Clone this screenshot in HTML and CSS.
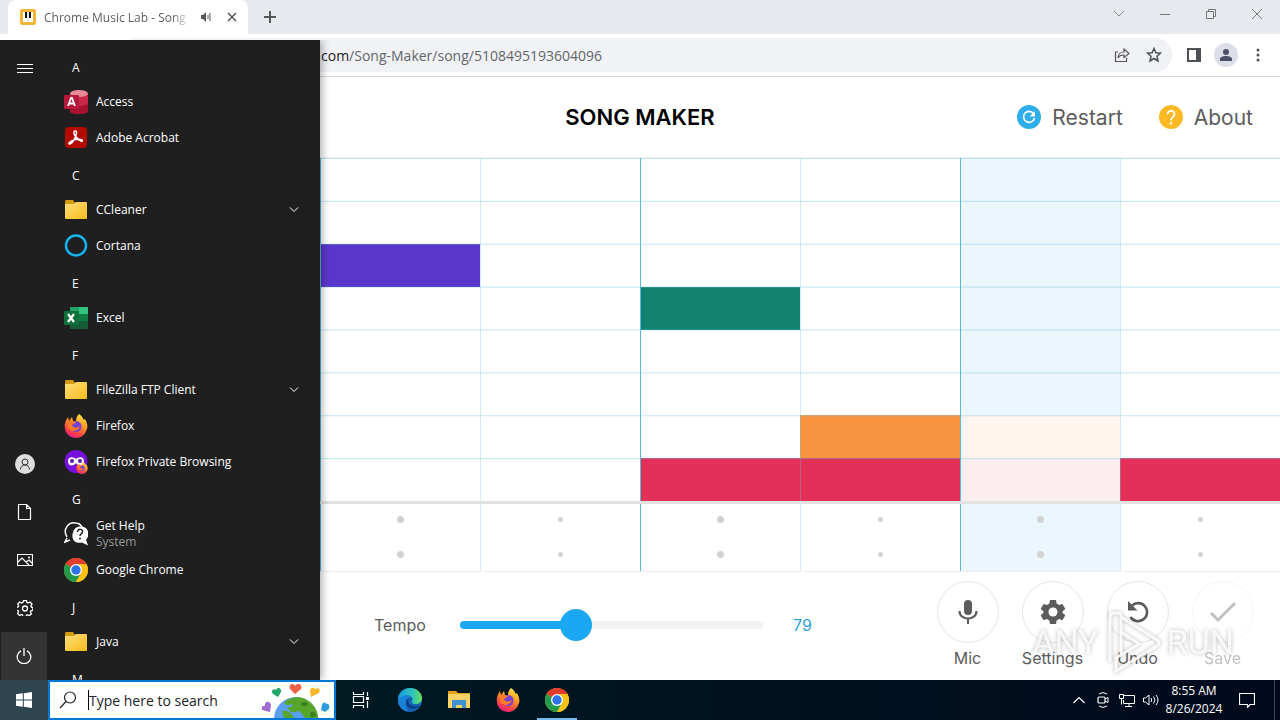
FILE: index.html
```html
<!DOCTYPE html>
<html lang="en">
<head>
<meta charset="utf-8">
<title>Chrome Music Lab - Song Maker</title>
<link rel="stylesheet" href="styles.css">
</head>
<body>
<svg class="sprite" aria-hidden="true">
  <defs>
    <linearGradient id="gold" x1="0" y1="0" x2="1" y2="1"><stop offset="0" stop-color="#ffe07a"/><stop offset="1" stop-color="#f7bb1c"/></linearGradient>
    <linearGradient id="flame" x1=".8" y1="0" x2=".3" y2="1"><stop offset="0" stop-color="#fff04a"/><stop offset=".4" stop-color="#ff9a22"/><stop offset=".8" stop-color="#ff3a50"/><stop offset="1" stop-color="#e6208a"/></linearGradient>
    <linearGradient id="sea" x1="0" y1="0" x2="1" y2="0"><stop offset="0" stop-color="#1b9de2"/><stop offset=".6" stop-color="#2cc4bd"/><stop offset="1" stop-color="#6ade5b"/></linearGradient>
  </defs>
  <symbol id="folder" viewBox="0 0 24 24"><path d="M1 4q0-2 1-2h7l2 3h11q1 0 1 1v5H1z" fill="#d59b12"/><path d="M1 6h9l2-2h10q1 0 1 1v15q0 1-1 1H2q-1 0-1-1z" fill="url(#gold)"/></symbol>
  <symbol id="firefox" viewBox="0 0 24 24"><path d="M15 0c4 3 4 5 5 6l1-1c2 4 3 7 2 10-2 6-6 9-11 9S1 20 1 14c-1-4 1-8 3-11l1 4 3-4 1 4h3c0-3 1-5 3-7z" fill="url(#flame)"/><circle cx="12" cy="12.500" r="5.500" fill="#7542d8"/><path d="M4 8c4-2 5 0 8 0-1 2-4 2-4 4 3 2 5 2 8 0-1 5-8 7-12 2z" fill="#ff7a24"/></symbol>
  <symbol id="chrome" viewBox="0 0 24 24"><circle cx="12" cy="12" r="12" fill="#fbc116"/><path d="M12 12L1.600 6A12 12 0 0 1 22.400 6z" fill="#e33b2e"/><path d="M1.600 6A12 12 0 0 0 12 24l5-9-5-3z" fill="#239a4b"/><path d="M12 6h10.400A12 12 0 0 1 12 24l5.200-9z" fill="#fbc116"/><circle cx="12" cy="12" r="6" fill="#fff"/><circle cx="12" cy="12" r="4.700" fill="#2e73e8"/></symbol>
  <symbol id="down" viewBox="0 0 10 10"><path d="M1 2.500l4 4 4-4" fill="none" stroke="currentColor"/></symbol>
</svg>

<div class="desktop">
  <div class="browser">
    <div class="tabstrip">
      <div class="tab">
        <svg class="i16" viewBox="0 0 16 16"><rect width="16" height="16" rx="2" fill="#f3b63b"/><path d="M3 3h10v10H3z" fill="#fff"/><path d="M5 3h2v6H5zM9 3h2v6H9z" fill="#111"/><path d="M8 3v10" stroke="#ccc"/></svg>
        <span class="tab-title">Chrome Music Lab - Song Maker</span>
        <svg class="i12" viewBox="0 0 12 12"><path d="M1 4h2l3-3v10L3 8H1z" fill="#555"/><path d="M8 4v4M10 2v8" stroke="#555"/></svg>
        <button class="plain close" aria-label="Close tab"><svg class="i10" viewBox="0 0 10 10"><path d="M1 1l8 8M9 1L1 9" stroke="#555" stroke-width="1.500"/></svg></button>
      </div>
      <button class="plain newtab" aria-label="New tab"><svg class="i12" viewBox="0 0 12 12"><path d="M6 0v12M0 6h12" stroke="#555" stroke-width="2"/></svg></button>
      <div class="winbtns">
        <button class="plain" aria-label="Search tabs"><svg class="i12" viewBox="0 0 12 12"><path d="M1 3l5 5 5-5" fill="none" stroke="#888"/></svg></button>
        <button class="plain" aria-label="Minimize"><svg class="i12" viewBox="0 0 12 12"><path d="M1 6.500h10" stroke="#777"/></svg></button>
        <button class="plain" aria-label="Restore"><svg class="i12" viewBox="0 0 12 12"><path d="M1.500 3.500h7v7h-7zM3.500 3.500v-2h7v7h-2" fill="none" stroke="#777"/></svg></button>
        <button class="plain" aria-label="Close"><svg class="i12" viewBox="0 0 12 12"><path d="M1 1l10 10M11 1L1 11" stroke="#777"/></svg></button>
      </div>
    </div>
    <div class="toolbar">
      <div class="omnibox">
        <label for="url">com</label><input id="url" value="/Song-Maker/song/5108495193604096">
        <button class="plain" aria-label="Share"><svg class="i16" viewBox="0 0 16 16"><path d="M4 5H1.500v9.500h11V11M4 11c0-4 3-6 6-6V2l5 4.500-5 4V8c-3 0-5 1-6 3z" fill="none" stroke="#555" stroke-width="1.200"/></svg></button>
        <button class="plain" aria-label="Bookmark"><svg class="i16" viewBox="0 0 16 16"><path d="M8 1.500l1.900 4.300 4.600.4-3.500 3.100 1 4.700-4-2.500L4 14l1-4.700L1.500 6.200l4.600-.4z" fill="none" stroke="#4d5156" stroke-width="1.500"/></svg></button>
      </div>
      <button class="plain" aria-label="Side panel"><svg class="i14" viewBox="0 0 14 14"><path d="M1 1h12v12H1z" fill="none" stroke="#4d5156" stroke-width="2"/><path d="M9 1h4v12H9z" fill="#4d5156"/></svg></button>
      <button class="plain avatar" aria-label="Profile"><svg class="i14" viewBox="0 0 14 14"><circle cx="7" cy="4" r="3" fill="#4b5066"/><path d="M1 13v-2c0-4 12-4 12 0v2z" fill="#4b5066"/></svg></button>
      <button class="plain" aria-label="Menu"><svg class="i14" viewBox="0 0 14 14"><circle cx="7" cy="2" r="1.500" fill="#4d5156"/><circle cx="7" cy="7" r="1.500" fill="#4d5156"/><circle cx="7" cy="12" r="1.500" fill="#4d5156"/></svg></button>
    </div>

    <header class="songhead">
      <h1>SONG MAKER</h1>
      <div class="actions">
        <button class="plain action"><svg class="i24" viewBox="0 0 24 24"><circle cx="12" cy="12" r="12" fill="#2eaee8"/><path d="M16.500 8.500A5.500 5.500 0 1 0 17.500 13" fill="none" stroke="#fff" stroke-width="1.600"/><path d="M18 6v5.500h-5.500z" fill="#fff"/></svg>Restart</button>
        <button class="plain action"><svg class="i24" viewBox="0 0 24 24"><circle cx="12" cy="12" r="12" fill="#fdb924"/><path d="M8.500 9.500C8.500 4.500 16 5 15.500 9.500 15 12 12 12 12 15.500" fill="none" stroke="#fff" stroke-width="1.700"/><circle cx="12" cy="18.300" r="1.200" fill="#fff"/></svg>About</button>
      </div>
    </header>

    <main class="notes">
      <div class="now"></div>
      <div class="note violet"></div><div class="note teal"></div><div class="note orange"></div>
      <div class="note red r5"></div><div class="note red r6"></div><div class="note red r8"></div>
      <div class="note paleorange"></div><div class="note palered"></div>
      <div class="lines"></div>
    </main>
    <section class="beats">
      <i></i><i></i><i></i><i></i><i></i><i></i><i></i><i></i>
      <i></i><i></i><i></i><i></i><i></i><i></i><i></i><i></i>
    </section>

    <footer class="controls">
      <label for="tempo">Tempo</label>
      <input id="tempo" class="tempo" type="range" min="40" max="146" value="79">
      <output for="tempo">79</output>
      <div class="rounds">
        <button class="plain round"><span><svg class="i28" viewBox="0 0 28 28"><rect x="10" y="2" width="8" height="15" rx="4" fill="#5c5c5c"/><path d="M5.500 13c0 10 17 10 17 0M14 20v6" fill="none" stroke="#5c5c5c" stroke-width="2.200"/></svg></span>Mic</button>
        <button class="plain round"><span><svg class="i28" viewBox="0 0 28 28"><path d="M11 2h6l.6 3.500 2.500 1.400L23.400 6l3 5-2.800 2.200v1.800l2.800 2.200-3 5-3.300-1.200-2.500 1.400L17 26h-6l-.6-3.600-2.500-1.400-3.300 1.200-3-5L4.400 15v-1.800L1.600 11l3-5 3.300.9 2.500-1.400z" fill="#5c5c5c"/><circle cx="14" cy="14" r="4.500" fill="#fff"/></svg></span>Settings</button>
        <button class="plain round"><span><svg class="i28" viewBox="0 0 28 28"><path d="M8 7.500A9 9 0 1 1 6.500 19" fill="none" stroke="#5c5c5c" stroke-width="2.600"/><path d="M4 3v9.500h9.500z" fill="#5c5c5c"/></svg></span>Undo</button>
        <button class="plain round" disabled><span><svg class="i28" viewBox="0 0 28 28"><path d="M2 15l7 7L26 5" fill="none" stroke="#5c5c5c" stroke-width="3"/></svg></span>Save</button>
      </div>
      <div class="watermark"><b>ANY</b><svg viewBox="0 0 60 64"><path d="M7 52V7q0-4 4-4h4q3 0 3 3v39M18 7l36 23q4 3 0 6L13 61V48l23-14-18-12" fill="none" stroke="#fff" stroke-opacity=".85" stroke-width="3"/></svg><b>RUN</b></div>
    </footer>
  </div>

  <aside class="start">
    <nav class="rail">
      <button class="plain" aria-label="Expand"><svg class="i16" viewBox="0 0 16 16"><path d="M0 4.500h16M0 8.500h16M0 12.500h16" stroke="#fff"/></svg></button>
      <button class="plain user" aria-label="User"><svg class="i20" viewBox="0 0 20 20"><circle cx="10" cy="10" r="10" fill="#ddd"/><circle cx="10" cy="8" r="3" fill="none" stroke="#333"/><path d="M5.500 15.500c0-6 9-6 9 0" fill="none" stroke="#333"/></svg></button>
      <button class="plain" aria-label="Documents"><svg class="i16" viewBox="0 0 16 16"><path d="M1.500.5h8l4 4v11h-12zM9.500.5v4h4" fill="none" stroke="#fff" stroke-width="1.200"/></svg></button>
      <button class="plain" aria-label="Pictures"><svg class="i16" viewBox="0 0 16 16"><path d="M.5 2.500h15v11H.5zM1 10l4-4 7 7M9 10l3-2 3 3" fill="none" stroke="#fff" stroke-width="1.200"/><circle cx="12" cy="5.500" r="1" fill="#fff"/></svg></button>
      <button class="plain" aria-label="Settings"><svg class="i16" viewBox="0 0 16 16"><path d="M6.500.5h3l.4 2 1.300.6 1.900-1.100 1.900 2-1.100 1.800.5 1.300 1.500.4v2.800l-2 .5-.5 1.200 1 1.800-2 1.900-1.800-1-1.200.5-.5 1.800h-3l-.4-2-1.300-.5-1.700 1-2-2 1.100-1.700-.6-1.200-1.700-.5V7.400l1.800-.4.6-1.300-1-1.700 2-2L4.400 3l1.500-.5z" fill="none" stroke="#fff" stroke-width="1.300"/><circle cx="8" cy="8.500" r="2.500" fill="none" stroke="#fff" stroke-width="1.300"/></svg></button>
      <button class="plain power" aria-label="Power"><svg class="i16" viewBox="0 0 16 16"><path d="M5 2.800a6.800 6.800 0 1 0 6 0M8 0v8" fill="none" stroke="#fff" stroke-width="1.300"/></svg></button>
    </nav>
    <ul class="apps">
      <li class="letter">A</li>
      <li><svg class="i24" viewBox="0 0 24 24"><path d="M6 3v18c0 4 18 4 18 0V3z" fill="#c82746"/><path d="M6 14c3 3 15 3 18-1v8c0 4-18 4-18 0z" fill="#a6122d"/><ellipse cx="15" cy="3.500" rx="9" ry="3.500" fill="#e8899a"/><rect y="5" width="15" height="14" rx="1" fill="#b7193a"/><path d="M4 16L7 8h1l3 8M5 13.500h5" fill="none" stroke="#fff" stroke-width="1.800"/></svg><span>Access</span></li>
      <li><svg class="i24" viewBox="0 0 24 24"><rect x="1" y="1" width="22" height="21" rx="4" fill="#b30b00"/><path d="M11 5c3-1 1 6-1 9-2 4-6 5-5 3 2-3 9-5 13-3 2 3-4 0-6-3-2-2-3-6-1-6z" fill="none" stroke="#fff" stroke-width="1.500"/></svg><span>Adobe Acrobat</span></li>
      <li class="letter">C</li>
      <li><svg class="i24"><use href="#folder"/></svg><span>CCleaner</span><svg class="i10 more"><use href="#down"/></svg></li>
      <li><svg class="i24" viewBox="0 0 24 24"><circle cx="12" cy="11.500" r="10" fill="none" stroke="#066a9c" stroke-width="3"/><circle cx="12" cy="11.500" r="10" fill="none" stroke="#20b9e6" stroke-width="1.800"/></svg><span>Cortana</span></li>
      <li class="letter">E</li>
      <li><svg class="i24" viewBox="0 0 24 24"><path d="M6 1h9v22H6z" fill="#21a366"/><path d="M15 1h9v7h-9z" fill="#33c481"/><path d="M6 8h9v7H6zM6 15h18v8H6z" fill="#185c37"/><path d="M15 8h9v7h-9z" fill="#107c41"/><rect y="5" width="15" height="14" rx="1" fill="#0e7038"/><path d="M4 8l6 8M10 8l-6 8" stroke="#fff" stroke-width="2.200"/></svg><span>Excel</span></li>
      <li class="letter">F</li>
      <li><svg class="i24"><use href="#folder"/></svg><span>FileZilla FTP Client</span><svg class="i10 more"><use href="#down"/></svg></li>
      <li><svg class="i24"><use href="#firefox"/></svg><span>Firefox</span></li>
      <li><svg class="i24" viewBox="0 0 24 24"><circle cx="12" cy="11.500" r="11.500" fill="#7610db"/><path d="M4 11c0-5 6-4 8-2 2-2 8-3 8 2 0 6-6 5-8 2-2 3-8 4-8-2z" fill="#fff"/><circle cx="8" cy="11" r="2" fill="#5d18b4"/><circle cx="16" cy="11" r="2" fill="#5d18b4"/><use href="#firefox" x="12" y="12" width="12" height="12"/></svg><span>Firefox Private Browsing</span></li>
      <li class="letter">G</li>
      <li><svg class="i24" viewBox="0 0 24 24"><path d="M3 16l-2 4 5-2M3 15C-2 7 5 0 11 1c4 0 6 2 7 4" fill="none" stroke="#fff" stroke-width="1.500"/><path d="M16 4.500c10 0 10 10 6 13l2 6-6-3c-8 2-11-5-9-10 1-4 4-6 7-6z" fill="#fff"/><path d="M13.500 10c0-4 6-3 5 0-.5 2-2.500 2-2.500 4" fill="none" stroke="#222" stroke-width="1.500"/><circle cx="16" cy="16.500" r="1" fill="#222"/></svg><span>Get Help<small>System</small></span></li>
      <li><svg class="i24"><use href="#chrome"/></svg><span>Google Chrome</span></li>
      <li class="letter">J</li>
      <li><svg class="i24"><use href="#folder"/></svg><span>Java</span><svg class="i10 more"><use href="#down"/></svg></li>
      <li class="letter">M</li>
    </ul>
  </aside>

  <div class="taskbar">
    <button class="plain win" aria-label="Start"><svg class="i16" viewBox="0 0 16 16"><path d="M0 2.200l6.800-.9v6.200H0zM7.800 1.200L16 0v7.500H7.800zM0 8.500h6.800v6.200L0 13.800zM7.800 8.500H16V16l-8.200-1.200z" fill="#fff"/></svg></button>
    <div class="search">
      <svg class="i18" viewBox="0 0 18 18"><circle cx="11" cy="6.500" r="5.500" fill="none" stroke="#222" stroke-width="1.200"/><path d="M7 10.500L1 17" stroke="#222" stroke-width="1.200"/></svg>
      <input aria-label="Search" placeholder="Type here to search">
      <svg class="earth" viewBox="0 0 72 36"><circle cx="36" cy="37" r="22" fill="#5b9ff0"/><path d="M24 21c6-7 20-9 29 2 4 5 5 9 5 13H46c-4-2-4-7-9-7-3 3-9 0-9-3 3-1 5-2 4-4-3 2-6 1-8-1z" fill="#57a52b"/><path d="M22 29c5-1 9 1 12 7H24z" fill="#57a52b"/><path d="M41 21c2-2 7-1 7 1s-5 3-7 1zM50 31c3-3 6 0 6 3l-5 2z" fill="#3a7f20"/><path d="M35 12l-5-5c-2-4 3-7 5-3 3-4 8-1 6 3z" fill="#f06146"/><path d="M18 15l-5-3c-3-3 1-6 3-4 2-4 6-1 5 2z" fill="#24a866"/><path d="M51 15l-1-6c0-4 4-4 5-2 4-2 6 1 4 4z" fill="#f7b82c"/><path d="M10 30l-8-2c-1-3 1-5 3-4-1-5 5-6 6-1z" fill="#a06cd0"/><path d="M61 28l1-5c1-3 4-3 4-1 3-1 4 2 3 5l-4 3z" fill="#2f9bdc"/></svg>
    </div>
    <button class="plain task" aria-label="Task view"><svg class="i18" viewBox="0 0 18 18"><path d="M1.500 1v2.500h10V1M1.500 17v-2.500h10V17M1.500 5.500h10v6h-10zM15.500 1v4M15.500 10v7" fill="none" stroke="#fff" stroke-width="1.200"/><path d="M14 6h3v3h-3z" fill="#fff"/></svg></button>
    <button class="plain task" aria-label="Edge"><svg class="i24" viewBox="0 0 24 24"><circle cx="12" cy="12" r="12" fill="#1464b5"/><path d="M0 12C0 5 5 0 12 0c7 0 12 5 12 10 0 4-3 6-6 6-4 0-5-2-4-3 3-5-7-9-14-1z" fill="url(#sea)"/><path d="M0 12c4-6 11-6 13-3-6 1-7 8-3 14C4 23 0 18 0 12z" fill="#1a82d7"/><path d="M11 10c-3 5 2 10 11 8-4 4-13 4-14-3 0-3 1-4 3-5z" fill="#0b3f86"/></svg></button>
    <button class="plain task" aria-label="File Explorer"><svg class="i24" viewBox="0 0 24 24"><path d="M1 3h8l2 2h12v6H1z" fill="#e4a21b"/><path d="M1 6h22v14H1z" fill="#f9d266"/><path d="M5 12h14v8h-4v-3H9v3H5z" fill="#3f91cf"/></svg></button>
    <button class="plain task" aria-label="Firefox"><svg class="i24"><use href="#firefox"/></svg></button>
    <button class="plain task open" aria-label="Google Chrome"><svg class="i24"><use href="#chrome"/></svg></button>
    <div class="tray">
      <svg class="i16" viewBox="0 0 16 16"><path d="M2.500 11L8 5.500l5.500 5.500" fill="none" stroke="#fff" stroke-width="1.200"/></svg>
      <svg class="i16" viewBox="0 0 16 16"><rect x="3" y="5" width="7" height="6" rx="1" fill="none" stroke="#fff" stroke-width="1.200"/><path d="M10 7l3-1.500v5L10 9M4 2q4-3 8 0M4 14q4 3 8 0" fill="none" stroke="#fff"/></svg>
      <svg class="i16" viewBox="0 0 16 16"><path d="M5 3.500h10.500v8H4.500V8M10 11.500v3M6 14.500h7M.5 2.500h4v4h-4zM2.500 6.500v6" fill="none" stroke="#fff"/></svg>
      <svg class="i16" viewBox="0 0 16 16"><path d="M.5 6h2L6 3v10l-3.500-3h-2zM8 6q1.500 2 0 4M10.500 4.500q3 3.500 0 7M13 3q4 5 0 10" fill="none" stroke="#fff"/></svg>
    </div>
    <div class="clock"><span>8:55 AM</span><span>8/26/2024</span></div>
    <button class="plain notify" aria-label="Notifications"><svg class="i16" viewBox="0 0 16 16"><path d="M.5 1.500h15v11H11l-2.500 3v-3h-8z" fill="none" stroke="#fff" stroke-width="1.200"/></svg></button>
  </div>
</div>
</body>
</html>
```
FILE: styles.css
```css
* { box-sizing: border-box; }
body { margin: 0; font-family: "Open Sans", "Noto Sans", sans-serif; font-size: 12px; }
.sprite { position: absolute; width: 0; height: 0; }
.plain { margin: 0; padding: 0; border: 0; background: none; font: inherit; color: inherit; display: flex; align-items: center; justify-content: center; }
svg { display: block; flex: none; }
.i10 { width: 10px; height: 10px; }
.i12 { width: 12px; height: 12px; }
.i14 { width: 14px; height: 14px; }
.i16 { width: 16px; height: 16px; }
.i18 { width: 18px; height: 18px; }
.i20 { width: 20px; height: 20px; }
.i24 { width: 24px; height: 24px; }
.i28 { width: 28px; height: 28px; }

.desktop { position: relative; min-height: 100vh; display: flex; flex-direction: column; overflow: hidden; }
.browser { flex: 1; display: flex; flex-direction: column; background: #fff; }

/* Browser frame */
.tabstrip { height: 34px; display: flex; align-items: stretch; background: #e6e9ed; padding-left: 8px; }
.tab { width: 240px; display: flex; align-items: center; padding: 0 6px 0 12px; background: #fff; border-radius: 8px 8px 0 0; color: #5c5f63; }
.tab-title { flex: 1; margin: 0 10px 0 8px; overflow: hidden; white-space: nowrap; -webkit-mask-image: linear-gradient(90deg, #000 88%, transparent); mask-image: linear-gradient(90deg, #000 88%, transparent); }
.close { width: 20px; margin-left: 10px; }
.newtab { width: 44px; }
.winbtns { margin-left: auto; display: flex; }
.winbtns .plain { width: 46px; height: 28px; }
.toolbar { height: 43px; display: flex; align-items: center; gap: 8px; padding: 0 10px 0 120px; border-bottom: 1px solid #d5d7da; }
.toolbar .plain { width: 24px; height: 24px; }
.omnibox { flex: 1; height: 34px; display: flex; align-items: center; gap: 8px; margin-right: 2px; padding: 0 6px 0 201px; background: #f1f2f5; border-radius: 17px; font-size: 14px; color: #222; }
.omnibox input { flex: 1; margin-left: -8px; padding: 0; border: 0; background: none; font: inherit; color: #62666b; }
.toolbar .avatar { border-radius: 50%; background: #dcdfe8; }

/* Song Maker */
.songhead { height: 81px; display: flex; align-items: center; justify-content: center; position: relative; border-bottom: 1px solid #eee; font-family: Inter, sans-serif; }
.songhead h1 { margin: 0; font-size: 22px; font-weight: 600; color: #000; }
.actions { position: absolute; right: 27px; display: flex; gap: 36px; }
.action { gap: 11px; font-size: 21px; color: #5c5c5c; }
.notes { flex: 1; position: relative; display: grid; grid-template-columns: repeat(8, 1fr); grid-template-rows: repeat(8, 1fr); }
.now { grid-area: 1 / 7 / 9 / 8; background: #ebf6fd; }
.violet { grid-area: 3 / 3; background: #5b36cb; }
.teal { grid-area: 4 / 5; background: #128270; }
.orange { grid-area: 7 / 6; background: #f99540; }
.red { background: #e33059; }
.r5 { grid-area: 8 / 5; }
.r6 { grid-area: 8 / 6; }
.r8 { grid-area: 8 / 8; }
.paleorange { grid-area: 7 / 7; background: #fff4ee; }
.palered { grid-area: 8 / 7; background: #fceeee; }
.lines { position: absolute; inset: 0; background:
  linear-gradient(90deg, #5ab8d8 1px, transparent 1px) 0 0 / 25% 100%,
  linear-gradient(90deg, #64c3d94d 1px, transparent 1px) 0 0 / 12.5% 100%,
  linear-gradient(#64c3d966 1px, transparent 1px) 0 0 / 100% 12.5%; }
.beats { display: grid; grid-template-columns: repeat(8, 1fr); grid-auto-rows: 30px; row-gap: 5px; padding-bottom: 2px; border-top: 3px solid #e2e2e2; border-bottom: 1px solid #eee; background:
  linear-gradient(90deg, #5ab8d8 1px, transparent 1px) 0 0 / 25% 100%,
  linear-gradient(90deg, #64c3d94d 1px, transparent 1px) 0 0 / 12.5% 100%,
  linear-gradient(90deg, transparent 75%, #ebf6fd 75%, #ebf6fd 87.5%, transparent 87.5%); }
.beats i { place-self: center; width: 5px; height: 5px; border-radius: 50%; background: #d2d2d2; }
.beats i:nth-child(odd) { width: 7px; height: 7px; }

.controls { position: relative; height: 108px; display: flex; align-items: center; padding: 0 15px 3px 374px; font-family: Inter, sans-serif; font-size: 16px; color: #5c5c5c; }
.controls > label { width: 86px; }
.tempo { width: 304px; height: 32px; margin: 0; appearance: none; background: none; }
.tempo::-webkit-slider-runnable-track { height: 8px; border-radius: 4px; background: linear-gradient(90deg, #1ba7f2 38%, #f3f3f3 38%); }
.tempo::-webkit-slider-thumb { appearance: none; width: 32px; height: 32px; margin-top: -12px; border-radius: 50%; background: #1ba7f2; }
.controls output { margin-left: 29px; color: #2f9fd4; }
.rounds { margin-left: auto; display: flex; }
.round { width: 85px; flex-direction: column; gap: 5px; }
.round span { width: 62px; height: 62px; display: flex; align-items: center; justify-content: center; border: 1px solid #e4e4e4; border-radius: 50%; }
.round:disabled { opacity: .38; }
.watermark { position: absolute; right: 46px; bottom: 6px; display: flex; align-items: center; gap: 4px; color: #ffffffd0; font: 34px "Liberation Sans Narrow", Roboto, sans-serif; filter: drop-shadow(0 0 2px #0005); pointer-events: none; }
.watermark b { font-weight: 400; }
.watermark svg { width: 60px; height: 64px; }

/* Start menu */
.start { position: absolute; left: 0; top: 40px; bottom: 40px; width: 320px; display: flex; background: #1f1f1f; color: #fff; box-shadow: 2px 0 8px #0005; overflow: hidden; clip-path: inset(0 -12px 0 0); }
.rail { width: 48px; display: flex; flex-direction: column; padding: 4px 0 0 1px; }
.rail .plain { height: 48px; flex: none; }
.rail .user { margin-top: auto; }
.rail .power { background: #333; margin-right: 1px; }
.apps { flex: 1; list-style: none; margin: 0; padding: 8px 20px 0 16px; }
.apps li { height: 36px; display: flex; align-items: center; gap: 8px; }
.apps .letter { padding: 2px 0 0 8px; }
.apps small { display: block; font-size: 12px; color: #999; }
.apps span { line-height: 16px; }
.more { margin-left: auto; margin-right: 1px; }

/* Taskbar */
.taskbar { height: 40px; display: flex; align-items: stretch; background: linear-gradient(90deg, #001a22 25%, #00101f 65%, #000a1c); color: #fff; }
.win { width: 48px; background: #2e4550; }
.search { width: 288px; display: flex; align-items: center; padding: 0 2px 0 9px; border: 2px solid #0078d7; background: #fff; }
.search input { flex: 1; min-width: 0; height: 20px; margin-left: 11px; padding: 0; border: 0; border-left: 1px solid #000; outline: 0; font: inherit; font-size: 14px; }
.search input::placeholder { color: #222; opacity: 1; }
.earth { width: 72px; height: 36px; }
.task { width: 49px; border-bottom: 2px solid transparent; border-top: 2px solid transparent; }
.open { background: linear-gradient(#76b9ed, #76b9ed) center bottom / 40px 2px no-repeat border-box; }
.tray { margin-left: auto; display: flex; align-items: center; gap: 8px; }
.clock { width: 70px; display: flex; flex-direction: column; align-items: center; justify-content: center; line-height: 18px; }
.notify { width: 46px; margin-right: 5px; padding-right: 10px; border-right: 1px solid #445; }
```
